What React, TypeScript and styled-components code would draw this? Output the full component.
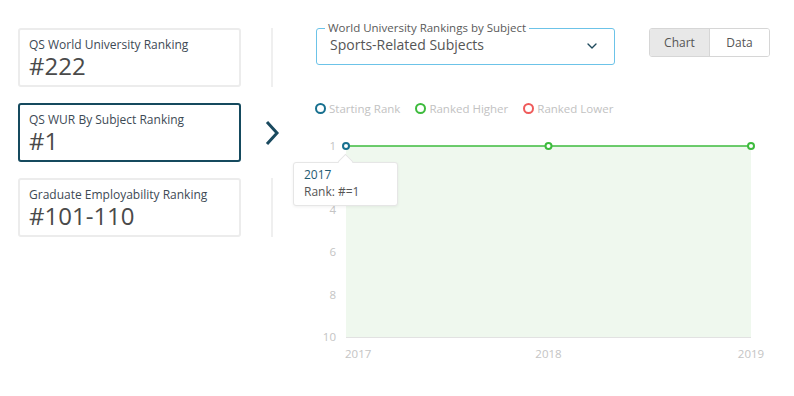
import React from 'react'
import styled, { createGlobalStyle, css } from 'styled-components'
import { ChevronDown } from 'lucide-react'

const GlobalStyle = createGlobalStyle`
  html, body {
    margin: 0;
    padding: 0;
    background: #fff;
    font-family: "Open Sans", "Liberation Sans", sans-serif;
  }
`

const Page = styled.div`
  display: flex;
  padding: 28px 0 0 18px;
  width: 794px;
  height: 396px;
  box-sizing: border-box;
`

const LeftCol = styled.div`
  display: flex;
  flex-direction: column;
  gap: 16px;
  width: 285px;
`

const Row = styled.div`
  display: flex;
  align-items: stretch;
`

const Card = styled.div<{ $active?: boolean }>`
  width: 223px;
  height: 59px;
  box-sizing: border-box;
  border: 2px solid #ececec;
  border-radius: 3px;
  padding: 7px 0 0 9px;
  color: #4b4b4b;
  ${({ $active }) =>
    $active &&
    css`
      border-color: #154a5e;
    `}
`

const CardLabel = styled.div`
  font-size: 12px;
  line-height: 15px;
  color: #3d4a55;
`

const CardValue = styled.div`
  font-size: 24px;
  line-height: 26px;
  margin-top: 1px;
  color: #4a4a4a;
`

const Indicator = styled.div`
  width: 62px;
  display: flex;
  justify-content: center;
  align-items: center;
`

const Separator = styled.div`
  width: 2px;
  align-self: stretch;
  background: #efefef;
`

const Right = styled.div`
  flex: 1;
  display: flex;
  flex-direction: column;
`

const TopRow = styled.div`
  display: flex;
  align-items: flex-start;
  padding-left: 13px;
`

const Select = styled.fieldset`
  margin: -7px 0 0 0;
  width: 299px;
  height: 44px;
  box-sizing: border-box;
  border: 1px solid #6cc3e8;
  border-radius: 3px;
  padding: 0 14px 0 8px;
  display: flex;
  align-items: flex-start;
  justify-content: space-between;
`

const SelectLegend = styled.legend`
  font-size: 11.5px;
  line-height: 14px;
  color: #5a5a5a;
  padding: 0 3px;
`

const SelectValue = styled.span`
  font-size: 14px;
  line-height: 19px;
  color: #555;
  padding-left: 5px;
`

const Toggle = styled.div`
  display: flex;
  margin-left: 34px;
  border: 1px solid #d6d6d6;
  border-radius: 3px;
  overflow: hidden;
`

const ToggleBtn = styled.div<{ $on?: boolean }>`
  width: 59px;
  height: 27px;
  display: flex;
  align-items: center;
  justify-content: center;
  font-size: 12px;
  color: #555;
  background: ${({ $on }) => ($on ? '#e8e8e8' : '#fff')};
  & + & {
    border-left: 1px solid #d6d6d6;
  }
`

const Legend = styled.div`
  display: flex;
  gap: 15px;
  margin-top: 36px;
  padding-left: 12px;
  height: 14px;
  align-items: center;
`

const LegendItem = styled.span`
  display: flex;
  align-items: center;
  gap: 3px;
  font-size: 11.5px;
  color: #c2c2c2;
`

const Dot = styled.span<{ $color: string }>`
  width: 7px;
  height: 7px;
  border-radius: 50%;
  border: 2px solid ${({ $color }) => $color};
`

const ChartWrap = styled.div`
  position: relative;
  margin-top: 5px;
  height: 250px;
`

const Tooltip = styled.div`
  position: absolute;
  left: -10px;
  top: 42px;
  width: 105px;
  height: 44px;
  box-sizing: border-box;
  background: #fff;
  border: 1px solid #e6e6e6;
  border-radius: 3px;
  box-shadow: 0 1px 3px rgba(0, 0, 0, 0.06);
  padding: 3px 0 0 10px;
  font-size: 12px;
  line-height: 17px;
  &::before {
    content: '';
    position: absolute;
    left: 46px;
    top: -7px;
    width: 10px;
    height: 10px;
    background: #fff;
    border-left: 1px solid #e6e6e6;
    border-top: 1px solid #e6e6e6;
    transform: rotate(45deg);
  }
`

const TipYear = styled.div`
  color: #1f5b72;
`

const TipRank = styled.div`
  color: #555;
`

const cards = [
  { label: 'QS World University Ranking', value: '#222' },
  { label: 'QS WUR By Subject Ranking', value: '#1', active: true },
  { label: 'Graduate Employability Ranking', value: '#101-110' },
]

const x0 = 43
const x1 = 448
const yTop = 26
const yBot = 217
const rankY = (r: number) => yTop + ((r - 1) * (yBot - yTop)) / 9

const Chart = () => {
  const xs = [x0, (x0 + x1) / 2, x1]
  return (
    <svg width={480} height={250} style={{ display: 'block' }}>
      <rect x={x0} y={yTop} width={x1 - x0} height={yBot - yTop} fill="#eff8ee" />
      <line x1={x0} y1={yBot + 0.5} x2={x1} y2={yBot + 0.5} stroke="#e2e2e2" />
      {[1, 4, 6, 8, 10].map((r) => (
        <text key={r} x={33} y={rankY(r) + 4} textAnchor="end" fontSize="11.5" fill="#c4c4c4" fontFamily="Open Sans">
          {r}
        </text>
      ))}
      {['2017', '2018', '2019'].map((yr, i) => (
        <text
          key={yr}
          x={i === 0 ? x0 - 1 : xs[i]}
          y={238}
          textAnchor={i === 0 ? 'start' : 'middle'}
          fontSize="11.5"
          fill="#c4c4c4"
          fontFamily="Open Sans"
        >
          {yr}
        </text>
      ))}
      <line x1={x0} y1={yTop} x2={x1} y2={yTop} stroke="#3dbb3d" strokeWidth={1.5} />
      {xs.map((x, i) => (
        <circle key={i} cx={x} cy={yTop} r={3} fill="#fff" stroke={i === 0 ? '#17708f' : '#3dbb3d'} strokeWidth={2} />
      ))}
    </svg>
  )
}

const Arrow = () => (
  <svg width={18} height={28} viewBox="0 0 18 28">
    <path d="M4 3 L14 14 L4 25" fill="none" stroke="#1a4a5f" strokeWidth={3} />
  </svg>
)

export default function App() {
  return (
    <>
      <GlobalStyle />
      <Page>
        <LeftCol>
          {cards.map((c) => (
            <Row key={c.label}>
              <Card $active={c.active}>
                <CardLabel>{c.label}</CardLabel>
                <CardValue>{c.value}</CardValue>
              </Card>
              <Indicator>{c.active ? <Arrow /> : <Separator />}</Indicator>
            </Row>
          ))}
        </LeftCol>
        <Right>
          <TopRow>
            <Select>
              <SelectLegend>World University Rankings by Subject</SelectLegend>
              <SelectValue>Sports-Related Subjects</SelectValue>
              <ChevronDown size={16} color="#1f4a5c" strokeWidth={2} style={{ marginTop: 3 }} />
            </Select>
            <Toggle>
              <ToggleBtn $on>Chart</ToggleBtn>
              <ToggleBtn>Data</ToggleBtn>
            </Toggle>
          </TopRow>
          <Legend>
            <LegendItem>
              <Dot $color="#17708f" />
              Starting Rank
            </LegendItem>
            <LegendItem>
              <Dot $color="#3dbb3d" />
              Ranked Higher
            </LegendItem>
            <LegendItem>
              <Dot $color="#ef5a5a" />
              Ranked Lower
            </LegendItem>
          </Legend>
          <ChartWrap>
            <Chart />
            <Tooltip>
              <TipYear>2017</TipYear>
              <TipRank>Rank: #=1</TipRank>
            </Tooltip>
          </ChartWrap>
        </Right>
      </Page>
    </>
  )
}
